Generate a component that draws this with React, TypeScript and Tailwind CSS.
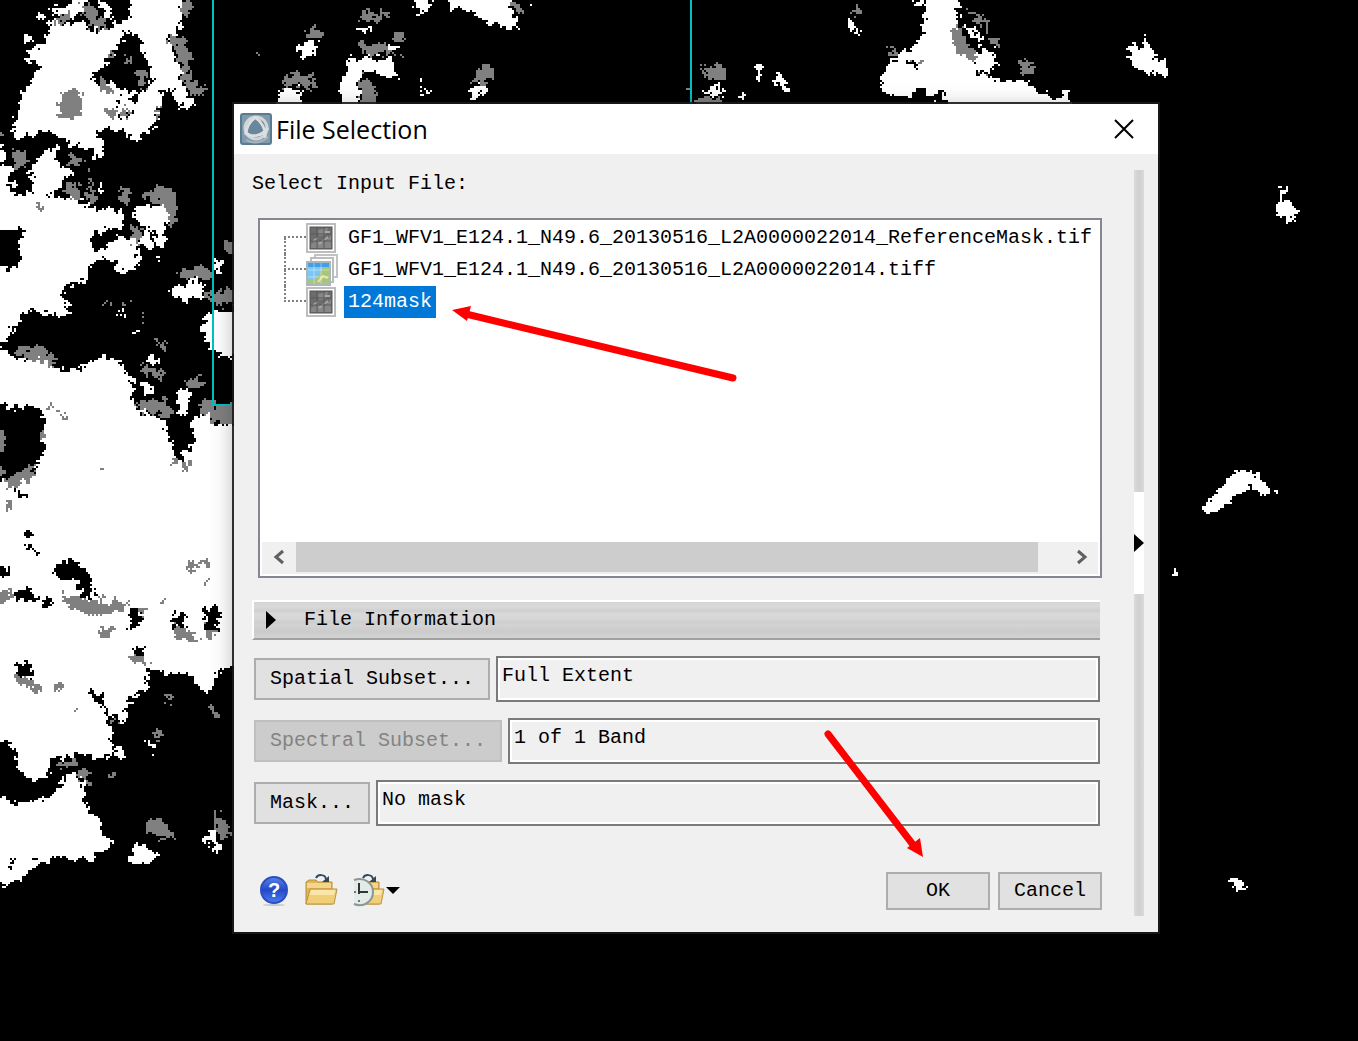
import { useState } from 'react';

const WHITE_AREAS = [
  'M50,14 L62,26 L78,20 L92,30 L104,30 L118,22 L128,20 L132,-20 L178,-20 L181,18 L182,24 L176,32 L168,34 L170,48 L176,58 L180,72 L181,84 L188,96 L194,104 L190,110 L180,106 L174,100 L172,88 L166,86 L160,98 L158,110 L152,130 L144,134 L138,140 L130,142 L126,132 L116,130 L104,128 L96,134 L92,148 L80,148 L66,142 L56,134 L50,130 L34,132 L14,138 L10,134 L16,118 L20,98 L26,84 L40,68 L34,64 L26,60 L30,50 L44,44 L46,34 L50,26 Z',
  'M52,4 L62,8 L70,2 L84,-20 L84,10 L74,16 L62,14 L52,12 Z M96,0 L110,4 L118,16 L106,16 Z M20,36 L30,32 L34,42 L24,42 Z M8,46 L12,48 L10,50 Z M36,10 L44,14 L42,24 L36,20 Z M-20,144 L0,144 L6,158 L4,162 L-20,158 Z',
  'M-20,166 L14,166 L8,176 L14,190 L24,196 L34,190 L30,170 L46,150 L56,148 L58,162 L66,166 L72,172 L62,180 L60,188 L46,196 L62,198 L76,194 L82,204 L98,208 L120,212 L122,224 L112,230 L92,232 L88,240 L96,252 L108,240 L118,236 L134,240 L138,252 L138,264 L130,270 L118,272 L112,258 L98,258 L88,270 L86,280 L70,282 L60,292 L66,300 L72,318 L60,312 L48,314 L30,310 L20,318 L12,330 L4,342 L-20,345 Z',
  'M-20,345 L4,350 L16,360 L30,358 L48,362 L64,370 L84,368 L92,360 L112,356 L120,364 L128,374 L134,384 L132,400 L138,410 L160,416 L164,426 L172,440 L176,452 L186,446 L196,432 L186,420 L204,412 L212,424 L260,425 L260,664 L218,668 L212,688 L206,692 L192,680 L190,672 L172,674 L156,670 L146,690 L128,696 L126,722 L114,718 L104,706 L98,690 L100,706 L108,720 L112,740 L110,752 L96,760 L82,752 L60,758 L50,758 L46,776 L30,780 L18,770 L14,750 L8,742 L-20,732 Z',
  'M-20,795 L0,795 L18,805 L40,798 L52,794 L62,782 L64,772 L76,772 L84,792 L80,798 L88,810 L100,820 L104,832 L112,844 L104,852 L84,860 L56,856 L36,866 L20,878 L8,884 L-20,880 Z',
  'M130,860 L136,842 L146,846 L158,856 L150,864 L130,864 Z M206,830 L212,830 L220,848 L218,854 L206,846 Z M146,738 L154,744 L152,750 L146,746 Z M112,752 L122,748 L126,756 L116,758 Z',
  'M136,206 L166,204 L168,220 L150,230 L152,246 L140,244 L144,226 L132,216 Z M154,226 L166,222 L164,244 L156,248 Z M98,178 L104,190 L98,192 Z M94,140 L104,138 L100,158 L92,160 Z',
  'M170,286 L180,284 L198,280 L204,290 L198,296 L184,300 L172,296 Z M202,320 L210,312 L260,306 L260,354 L220,356 L208,346 L202,334 Z M178,388 L190,390 L188,412 L180,414 L176,402 Z M148,354 L156,358 L156,366 L146,360 Z',
  'M116,312 L126,314 L122,318 Z M132,328 L138,330 L136,334 Z M156,254 L166,258 L158,260 Z M214,256 L222,258 L220,272 L214,268 Z M116,250 L138,250 L138,264 L120,270 L112,260 Z M136,378 L152,386 L154,394 L142,392 Z',
  'M298,46 L308,40 L318,42 L314,54 L304,58 L298,52 Z M276,104 L280,88 L300,88 L302,120 L276,120 Z M338,120 L340,84 L346,70 L350,56 L358,60 L370,56 L392,58 L394,68 L400,80 L380,76 L370,70 L358,74 L360,120 Z M388,44 L400,46 L396,50 L388,48 Z M350,30 L362,27 L374,30 L362,31 Z',
  'M408,-20 L436,-20 L430,8 L422,14 L414,8 Z M448,-20 L506,-20 L510,6 L518,26 L508,28 L488,22 L478,14 L464,8 L450,8 Z M528,0 L536,0 L532,4 Z M468,94 L476,84 L486,84 L484,92 L472,98 Z M416,84 L422,82 L420,88 Z M424,88 L430,90 L424,98 Z M416,94 L421,96 L418,98 Z',
  'M700,90 L720,84 L722,96 L704,94 Z M738,92 L744,92 L744,98 L738,96 Z M756,58 L760,66 L764,80 L755,70 Z M772,80 L778,70 L788,84 L784,90 Z M848,20 L858,28 L854,32 L848,28 Z M912,0 L930,0 L922,6 L914,6 Z',
  'M928,-20 L958,-20 L958,20 L952,32 L954,46 L966,52 L974,64 L980,74 L994,80 L1020,80 L1032,84 L1040,92 L1056,98 L1066,92 L1076,120 L950,120 L940,88 L932,98 L908,98 L900,98 L882,92 L880,76 L886,66 L900,52 L914,48 L922,38 L924,20 Z',
  'M964,26 L974,28 L984,42 L976,42 Z M974,52 L994,50 L996,64 L990,72 L978,68 Z M1128,48 L1134,42 L1140,50 L1144,40 L1148,32 L1148,44 L1156,56 L1166,66 L1166,76 L1156,74 L1136,68 L1128,54 Z',
  'M1276,188 L1286,186 L1284,198 L1292,202 L1298,216 L1290,222 L1274,212 L1278,204 Z M1203,505 L1214,496 L1226,480 L1238,472 L1256,472 L1264,484 L1274,494 L1262,496 L1248,484 L1238,494 L1222,506 L1206,516 Z M1170,572 L1177,565 L1175,576 L1170,579 Z M1229,878 L1236,878 L1244,886 L1242,894 L1236,890 Z',
];

const BLACK_AREAS = [
  'M126,30 L134,34 L142,40 L140,52 L148,60 L152,75 L148,88 L138,92 L120,90 L112,82 L100,88 L90,78 L96,70 L104,66 L110,56 L118,44 Z M108,12 L120,6 L128,8 L122,18 Z M116,96 L122,98 L116,108 Z M128,98 L138,96 L136,106 Z M122,108 L128,116 L120,118 Z M134,108 L138,118 L132,114 Z',
  'M-20,227 L26,228 L20,236 L20,260 L-20,262 Z M-20,250 L20,254 L18,266 L8,268 L-20,264 Z M12,180 L28,182 L34,190 L22,196 L12,190 Z M98,232 L108,236 L106,250 L96,248 Z',
  'M-20,404 L20,406 L42,408 L44,424 L44,454 L36,466 L34,478 L4,480 L-20,476 Z M162,418 L196,410 L192,422 L180,434 L194,440 L188,450 L176,456 L170,440 Z M172,450 L186,448 L182,462 L176,458 Z',
  'M54,564 L66,560 L78,562 L90,576 L94,596 L80,598 L78,580 L64,578 L54,574 Z M-20,562 L6,566 L6,578 L-20,576 Z M12,592 L24,588 L40,596 L34,602 L14,600 Z M40,600 L54,598 L50,606 L42,606 Z M24,540 L34,550 L42,554 L34,556 L26,546 Z M18,530 L36,532 L26,536 Z',
  'M130,610 L142,610 L140,626 L130,628 Z M172,612 L184,612 L184,632 L176,636 Z M204,608 L218,606 L218,632 L206,632 Z M16,664 L28,662 L34,676 L18,676 Z M128,650 L142,648 L146,660 L134,656 Z M150,668 L160,672 L152,686 L144,682 Z M84,690 L96,692 L106,704 L98,704 Z',
  'M-20,756 L16,754 L18,778 L30,786 L46,776 L52,792 L40,798 L24,798 L18,804 L8,796 L-20,790 Z M-20,732 L10,744 L6,748 L-20,746 Z M16,488 L26,494 L18,498 Z M12,858 L16,866 L10,868 Z M34,856 L40,858 L34,862 Z M210,838 L214,844 L210,846 Z M900,60 L920,62 L916,66 Z M910,94 L924,86 L930,98 L912,100 Z M936,88 L944,92 L938,98 Z',
];

const GRAY_AREAS = [
  'M66,88 L78,88 L82,100 L80,114 L70,118 L60,116 L58,106 Z M80,4 L90,4 L106,22 L102,32 L92,26 L80,10 Z M50,24 L58,18 L70,10 L70,20 L58,24 Z M98,78 L108,80 L112,92 L102,92 Z M136,70 L146,72 L146,86 L138,84 Z M108,52 L114,54 L112,64 Z M122,56 L132,58 L130,66 Z M104,106 L118,110 L114,118 L106,116 Z M122,104 L134,112 L124,116 Z M154,106 L160,108 L156,122 Z',
  'M170,32 L184,38 L190,56 L188,72 L196,84 L212,90 L196,96 L186,88 L180,70 L180,56 L170,44 Z M180,0 L192,0 L190,14 L182,14 Z M12,150 L24,150 L26,166 L18,168 L14,160 Z M-20,130 L4,132 L2,138 L-20,138 Z M68,156 L80,158 L80,166 L68,164 Z M88,166 L91,166 L90,190 L87,190 Z',
  'M140,194 L160,184 L176,192 L176,222 L168,224 L168,204 L150,200 Z M130,224 L140,226 L140,248 L132,240 Z M120,184 L130,190 L128,202 L118,200 Z M66,182 L76,184 L80,200 L66,196 Z M84,192 L98,194 L96,202 L86,200 Z M36,202 L44,204 L40,210 Z M220,242 L250,240 L250,252 L220,250 Z',
  'M176,272 L200,264 L212,276 L200,280 L178,278 Z M204,292 L250,288 L250,304 L212,304 Z M14,348 L44,346 L54,358 L52,366 L36,360 L14,354 Z M184,384 L200,372 L200,386 L192,388 Z M136,402 L168,400 L172,414 L168,418 L154,412 L140,410 Z M196,402 L212,396 L214,404 L250,406 L250,424 L212,422 L200,410 Z',
  'M138,362 L150,368 L164,372 L164,380 L144,372 Z M156,338 L168,342 L162,350 Z M102,302 L114,302 L110,306 Z M122,300 L132,302 L124,304 Z M140,312 L148,318 L142,320 Z M46,402 L56,410 L48,408 Z M58,410 L70,420 L62,418 Z M-20,426 L4,430 L4,452 L-20,450 Z M38,430 L46,430 L44,440 Z M26,468 L34,464 L32,478 L6,488 L2,480 Z M-20,464 L6,466 L4,476 L-20,476 Z M6,500 L14,504 L8,510 Z M170,454 L176,462 L170,464 Z M182,460 L190,464 L184,472 Z M98,468 L100,468 L100,472 L98,472 Z',
  'M60,594 L76,598 L98,600 L128,602 L120,610 L108,614 L88,614 L64,604 Z M-20,592 L12,590 L12,602 L-20,604 Z M98,628 L112,628 L110,638 L102,638 Z M174,626 L190,632 L202,634 L186,640 L174,636 Z M206,626 L216,628 L212,640 L206,636 Z M138,610 L144,612 L140,618 Z M14,676 L26,678 L40,684 L40,692 L28,686 L14,684 Z M50,686 L64,684 L60,694 Z M72,706 L82,710 L74,712 Z M188,562 L210,560 L210,568 L198,564 L188,572 L184,578 Z M204,574 L210,578 L206,586 Z M160,600 L166,600 L164,606 Z M128,654 L142,656 L150,668 L138,664 Z',
  'M56,766 L74,758 L76,762 L60,768 Z M76,770 L88,770 L88,788 L82,782 Z M144,826 L150,818 L168,824 L176,840 L144,832 Z M214,810 L222,820 L230,830 L226,842 L214,830 Z M152,728 L160,732 L160,742 L154,738 Z M164,696 L172,696 L168,704 Z M208,702 L214,704 L218,716 L212,714 Z M110,772 L117,774 L114,780 Z M112,720 L118,722 L112,724 Z',
  'M304,32 L312,26 L324,32 L320,38 L306,38 Z M282,86 L284,74 L300,74 L312,74 L312,88 L304,90 L296,84 Z M360,74 L368,78 L376,90 L374,110 L360,110 Z M358,44 L362,38 L366,46 L380,42 L392,50 L402,56 L390,54 L364,54 Z M356,16 L366,10 L376,16 L378,8 L388,12 L378,20 L356,18 Z M392,32 L406,32 L402,42 L392,40 Z M508,0 L520,4 L524,14 L516,12 Z M470,80 L484,66 L496,68 L494,74 L478,84 Z M254,52 L264,55 L258,55 Z',
  'M702,66 L720,64 L726,72 L724,80 L706,78 Z M696,98 L720,98 L720,110 L696,110 Z M850,8 L858,6 L860,14 L852,14 Z M952,30 L958,22 L968,44 L978,52 L974,62 L962,54 L952,46 Z M966,10 L978,12 L988,24 L984,28 Z M984,28 L990,36 L1000,40 L998,44 L988,42 Z M1016,62 L1022,58 L1034,64 L1032,72 L1024,74 Z M888,50 L898,47 L892,58 Z M912,60 L922,62 L918,65 Z M982,68 L986,70 L986,76 L982,74 Z M684,88 L690,88 L688,94 Z',
];

const FILES = [
  { name: 'GF1_WFV1_E124.1_N49.6_20130516_L2A0000022014_ReferenceMask.tif', kind: 'mask' },
  { name: 'GF1_WFV1_E124.1_N49.6_20130516_L2A0000022014.tiff', kind: 'raster' },
  { name: '124mask', kind: 'mask' },
];

const SatelliteMap = () => (
  <svg className="absolute top-0 left-0" width="1358" height="1041" viewBox="0 0 1358 1041" aria-hidden="true">
    <defs>
      {/* Frays the edges, then keeps one pixel of every 2x2 block and spreads it over the block */}
      <filter id="ragged" filterUnits="userSpaceOnUse" x="-20" y="-20" width="1400" height="1080" colorInterpolationFilters="sRGB">
        <feTurbulence type="fractalNoise" baseFrequency="0.16" numOctaves="4" seed="4" result="noise" />
        <feDisplacementMap in="SourceGraphic" in2="noise" scale="16" xChannelSelector="R" yChannelSelector="G" result="frayed" />
        <feFlood x="0" y="0" width="1" height="1" floodColor="#fff" result="dot" />
        <feOffset in="dot" dx="0" dy="0" x="0" y="0" width="2" height="2" result="cell" />
        <feTile in="cell" x="-20" y="-20" width="1400" height="1080" result="grid" />
        <feComposite in="frayed" in2="grid" operator="in" result="samples" />
        <feOffset in="samples" dx="1" dy="0" result="right" />
        <feMerge result="rows">
          <feMergeNode in="samples" />
          <feMergeNode in="right" />
        </feMerge>
        <feOffset in="rows" dx="0" dy="1" result="down" />
        <feMerge>
          <feMergeNode in="rows" />
          <feMergeNode in="down" />
        </feMerge>
      </filter>
    </defs>
    <g filter="url(#ragged)" shapeRendering="crispEdges">
      <path d="M-20,-20 H1380 V1060 H-20 Z" fill="#000" />
      <path d={WHITE_AREAS.join(' ')} fill="#fff" />
      <path d={BLACK_AREAS.join(' ')} fill="#000" />
      <path d={GRAY_AREAS.join(' ')} fill="#808080" />
    </g>
    <path d="M213,0 V405 H240 M691,0 V110" fill="none" stroke="#00c0c0" strokeWidth="2" />
  </svg>
);

const AppIcon = () => (
  <svg width="32" height="32" viewBox="0 0 32 32" aria-hidden="true">
    <rect x="1" y="1" width="30" height="30" rx="2" fill="#7f9bae" stroke="#5b7b91" strokeWidth="2" />
    <circle cx="16" cy="15" r="11" fill="#68869c" stroke="#d2d6d8" strokeWidth="3" />
    <path d="M16,4 C10,8 6,14 6,22 M15,4 C22,9 26,17 25,25 M5,19 C11,25 21,24 28,15" fill="none" stroke="#dcdedf" strokeWidth="3" />
    <path d="M6,27 C13,31 21,30 28,24" fill="none" stroke="#a9b6be" strokeWidth="2" />
  </svg>
);

const MaskIcon = () => (
  <svg width="32" height="32" viewBox="0 0 32 32" aria-hidden="true">
    <rect x="1" y="2" width="28" height="28" fill="#fff" stroke="#bdbdbd" strokeWidth="2" />
    <rect x="4" y="5" width="22" height="22" fill="#6c6c6c" />
    <path d="M5,22 L12,18 L18,21 L25,13 V26 H5 Z M12,8 L22,6 L20,13 L13,14 Z" fill="#868686" />
    <path d="M7,19 L12,16 M13,22 L22,15 M18,10 H24" stroke="#a8a8a8" strokeWidth="2" />
    <path d="M11,5 V27 M18,5 V27 M4,12 H26 M4,19 H26" stroke="#5a5a5a" strokeWidth="1" />
    <rect x="4" y="5" width="22" height="22" fill="none" stroke="#555" strokeWidth="1" />
  </svg>
);

const RasterIcon = () => (
  <svg width="32" height="32" viewBox="0 0 32 32" aria-hidden="true">
    <rect x="9" y="1" width="22" height="22" fill="#fff" stroke="#c2c2c2" strokeWidth="2" />
    <rect x="5" y="4" width="22" height="24" fill="#fff" stroke="#bcbcbc" strokeWidth="2" />
    <rect x="1" y="8" width="23" height="23" fill="#7cc6f4" stroke="#a9b8bd" strokeWidth="2" />
    <path d="M2,30 V26 L9,25 L14,19 L17,13 L23,12 V30 Z" fill="#a9c47b" />
    <path d="M2,9 H23 V13 H2 Z" fill="#3fa0e8" />
    <path d="M12,28 L17,22 L22,24" fill="none" stroke="#e4e1a8" strokeWidth="2" />
    <path d="M8,9 V30 M15,9 V30 M2,16 H23 M2,23 H23" stroke="#fff" strokeOpacity="0.4" strokeWidth="1" />
  </svg>
);

const HelpIcon = () => (
  <svg width="32" height="32" viewBox="0 0 32 32" aria-hidden="true">
    <defs>
      <linearGradient id="helpFill" x1="0" y1="0" x2="0" y2="1">
        <stop offset="0" stopColor="#5b84e6" />
        <stop offset="0.5" stopColor="#2448c8" />
        <stop offset="1" stopColor="#4d7df0" />
      </linearGradient>
    </defs>
    <ellipse cx="16" cy="30" rx="11" ry="1" fill="#c9c9c9" />
    <circle cx="16" cy="15" r="13" fill="url(#helpFill)" stroke="#2b4ec0" strokeWidth="2" />
    <text x="16" y="22" textAnchor="middle" fontFamily="Liberation Sans, sans-serif" fontSize="20" fontWeight="700" fill="#fff">?</text>
  </svg>
);

const Folder = () => (
  <>
    <path d="M2,8 L5,6 H12 L14,8 H28 V30 H2 Z" fill="#dfb65a" stroke="#b98f37" strokeWidth="1" />
    <path d="M3,9 H27 V14 H3 Z" fill="#f3d68d" />
    <path d="M6,15 H33 L30,30 H2 Z" fill="#f1cf78" stroke="#bd933c" strokeWidth="1" />
    <path d="M7,16 H31 L30,21 H6 Z" fill="#fae6a9" />
    <path d="M12,4 C14,0 21,0 22,5" fill="none" stroke="#31475a" strokeWidth="2" />
    <path d="M25,2 V8 H18 Z" fill="#31475a" />
  </>
);

const OpenIcon = () => (
  <svg width="34" height="34" viewBox="0 0 34 34" aria-hidden="true">
    <Folder />
  </svg>
);

const RecentIcon = () => (
  <svg width="48" height="34" viewBox="0 0 48 34" aria-hidden="true">
    <g transform="translate(-1 0)">
      <Folder />
    </g>
    <path d="M0,0 H8 V34 H0 Z" fill="#f0f0f0" />
    <path d="M2,6 C13,2 21,10 21,18 C21,27 12,34 2,30 Z" fill="#e3ebe9" />
    <path d="M2,6 C13,2 21,10 21,18 C21,27 12,34 2,30" fill="none" stroke="#8b9793" strokeWidth="2" />
    <path d="M7,9 V20 M7,18 H16" stroke="#303636" strokeWidth="2" />
    <path d="M2,18 H4 M7,26 V28" stroke="#6c7673" strokeWidth="2" />
    <path d="M34,13 H48 L41,20 Z" fill="#000" />
  </svg>
);

const SubsetRow = ({ label, value, disabled = false }: { label: string; value: string; disabled?: boolean }) => (
  <div className="mx-0.5 flex items-center gap-1.5">
    <button
      disabled={disabled}
      className="h-[42px] shrink-0 border-2 border-[#adadad] bg-[#e1e1e1] px-3.5 disabled:border-[#bfbfbf] disabled:bg-[#cccccc] disabled:text-[#838383]"
    >
      {label}
    </button>
    <input
      readOnly
      aria-label={label}
      value={value}
      className="h-[46px] min-w-0 flex-1 border-2 border-[#7a7a7a] bg-[#f0f0f0] px-1 pb-2 inset-ring-2 inset-ring-white outline-none"
    />
  </div>
);

const Arrows = () => (
  <svg className="pointer-events-none absolute top-0 left-0" width="1358" height="1041" viewBox="0 0 1358 1041" aria-hidden="true">
    <path d="M733,378 L466,314 M828,734 L914,846" fill="none" stroke="#f00" strokeWidth="7" strokeLinecap="round" />
    <path d="M452,310 L471,306 L467,321 Z M923,857 L907,848 L920,838 Z" fill="#f00" />
  </svg>
);

const App = () => {
  const [selected, setSelected] = useState('124mask');

  return (
    <main className="relative min-h-screen overflow-hidden bg-black">
      <SatelliteMap />

      <section
        role="dialog"
        aria-labelledby="dialog-title"
        className="absolute top-[102px] left-[232px] w-[928px] border-2 border-[#1a1a1a]/90 bg-[#f0f0f0] bg-clip-padding font-['Liberation_Mono',monospace] text-[20px] leading-7 text-black shadow-[0_4px_20px_rgba(0,0,0,0.25)]"
      >
        <header className="flex h-[50px] items-center gap-1 bg-white pr-5 pl-1.5">
          <AppIcon />
          <h1 id="dialog-title" className="flex-1 font-['Open_Sans',sans-serif] text-[25px]">File Selection</h1>
          <button aria-label="Close" className="p-1">
            <svg width="20" height="20" viewBox="0 0 20 20" aria-hidden="true">
              <path d="M1,1 L19,19 M19,1 L1,19" stroke="#000" strokeWidth="2" />
            </svg>
          </button>
        </header>

        <div className="flex gap-8 pt-4 pr-3.5 pb-4 pl-[18px]">
          <div className="flex min-w-0 flex-1 flex-col pb-1.5">
            <h2>Select Input File:</h2>

            {/* File tree */}
            <div className="mt-5 ml-1.5 flex h-[360px] flex-col border-2 border-[#828790] bg-white p-0.5">
              <ul className="flex-1">
                {FILES.map((file, i) => (
                  <li key={file.name} className="flex h-8 items-center pl-[22px]">
                    <span className="flex h-full w-[22px] flex-col">
                      <span className={`h-4 border-b-2 border-dotted border-[#808080] ${i > 0 ? 'border-l-2' : ''}`} />
                      <span className={`h-4 border-dotted border-[#808080] ${i < FILES.length - 1 ? 'border-l-2' : ''}`} />
                    </span>
                    {file.kind === 'mask' ? <MaskIcon /> : <RasterIcon />}
                    <button
                      onClick={() => setSelected(file.name)}
                      className={`ml-1.5 h-8 px-1 whitespace-nowrap ${selected === file.name ? 'bg-[#0078d7] text-white' : ''}`}
                    >
                      {file.name}
                    </button>
                  </li>
                ))}
              </ul>
              <div className="flex h-8 items-start bg-[#f0f0f0]">
                <button aria-label="Scroll left" className="flex h-[30px] w-[34px] items-center justify-center">
                  <svg width="14" height="16" viewBox="0 0 14 16" aria-hidden="true">
                    <path d="M11,2 L4,8 L11,14" fill="none" stroke="#606060" strokeWidth="3" />
                  </svg>
                </button>
                <div className="flex-1 pr-[26px]">
                  <div className="h-[30px] bg-[#cdcdcd]" />
                </div>
                <button aria-label="Scroll right" className="flex h-[30px] w-[34px] items-center justify-center">
                  <svg width="14" height="16" viewBox="0 0 14 16" aria-hidden="true">
                    <path d="M4,2 L11,8 L4,14" fill="none" stroke="#606060" strokeWidth="3" />
                  </svg>
                </button>
              </div>
            </div>

            <button className="mt-[22px] mr-0.5 flex h-10 items-center gap-7 border-t-2 border-b-2 border-l-2 border-t-white border-b-[#a0a0a0] border-l-white bg-[linear-gradient(#d4d4d4,#dadada_12%,#cfcfcf_26%,#d9d9d9_32%,#d6d6d6_48%,#cecece_56%,#d3d3d3_64%,#cbcbcb_82%,#d2d2d2)] pl-3">
              <svg width="10" height="18" viewBox="0 0 10 18" aria-hidden="true">
                <path d="M0,0 L10,9 L0,18 Z" fill="#000" />
              </svg>
              File Information
            </button>

            <div className="mt-4 flex flex-col gap-4">
              <SubsetRow label="Spatial Subset..." value="Full Extent" />
              <SubsetRow label="Spectral Subset..." value="1 of 1 Band" disabled />
              <SubsetRow label="Mask..." value="No mask" />
            </div>

            <footer className="mt-[46px] flex h-[38px] items-center gap-2 pl-1.5">
              <button aria-label="Help">
                <HelpIcon />
              </button>
              <button aria-label="Open file" className="ml-1.5">
                <OpenIcon />
              </button>
              <button aria-label="Recent files" className="ml-1.5">
                <RecentIcon />
              </button>
              <button className="ml-auto h-full w-[104px] border-2 border-[#adadad] bg-[#e1e1e1]">OK</button>
              <button className="h-full w-[104px] border-2 border-[#adadad] bg-[#e1e1e1]">Cancel</button>
            </footer>
          </div>

          {/* Collapsible side panel handle */}
          <div className="flex w-2.5 flex-col justify-center bg-linear-to-r from-[#dadada] via-[#d0d0d0] to-[#dadada]">
            <button aria-label="Expand panel" className="flex h-[102px] items-center bg-white">
              <svg width="10" height="18" viewBox="0 0 10 18" aria-hidden="true">
                <path d="M0,0 L10,9 L0,18 Z" fill="#000" />
              </svg>
            </button>
          </div>
        </div>
      </section>

      <Arrows />
    </main>
  );
};

export default App;
